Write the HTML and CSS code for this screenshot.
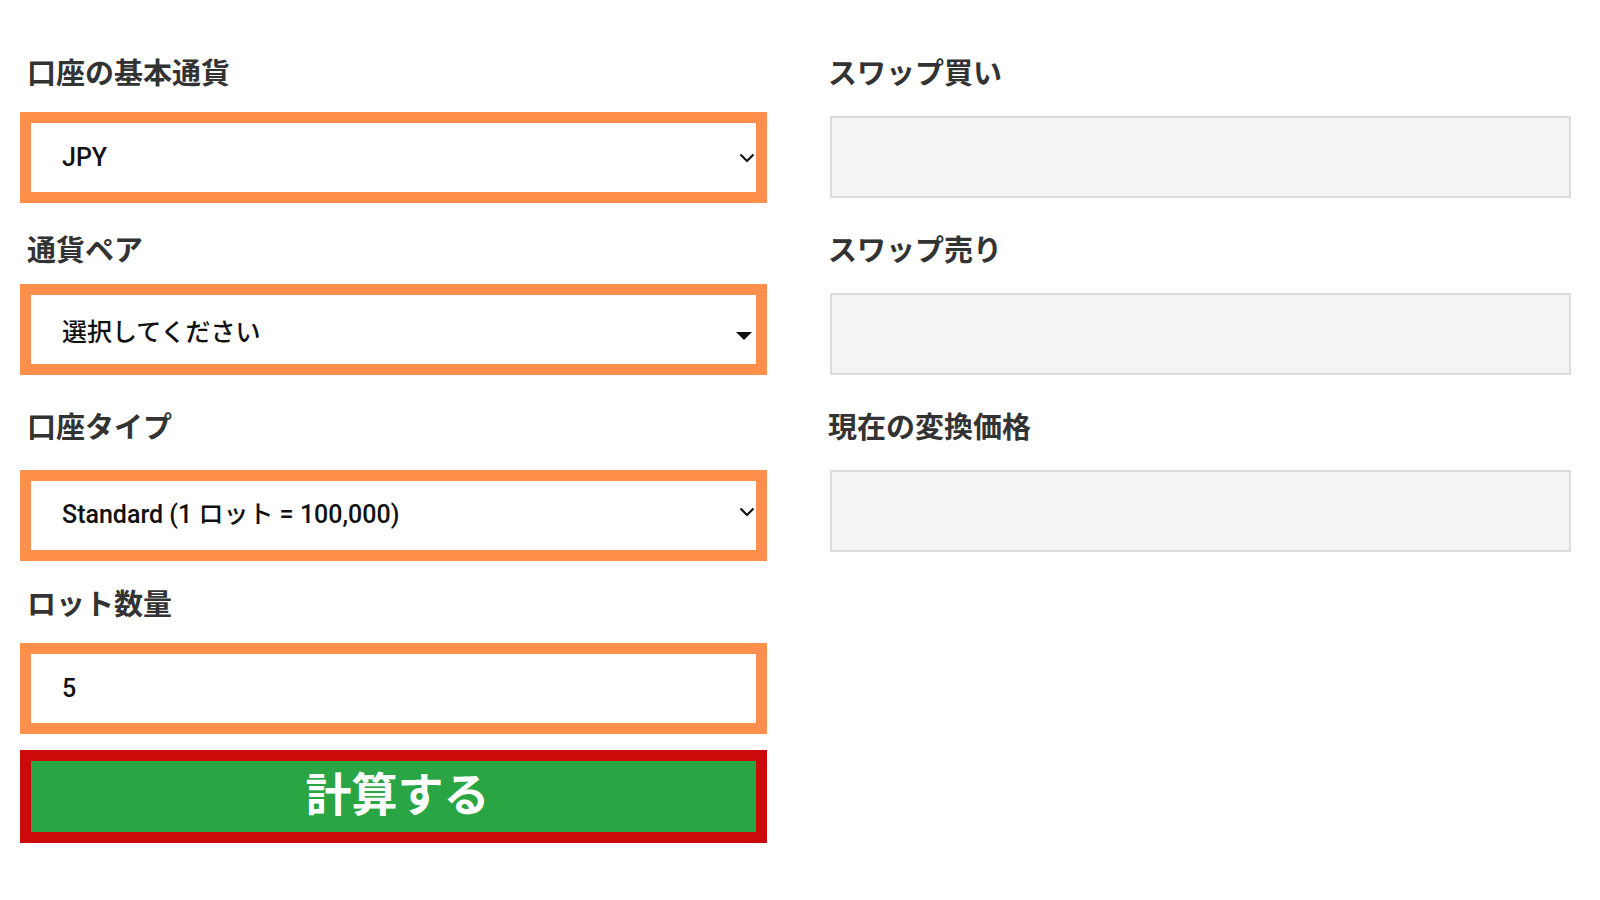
FILE: index.html
```html
<!DOCTYPE html>
<html lang="ja">
<head>
<meta charset="utf-8">
<title>スワップ計算ツール</title>
<link rel="stylesheet" href="styles.css">
</head>
<body>
<main class="calc">
  <section class="col col-left">
    <div class="field">
      <div class="label">口座の基本通貨</div>
      <div class="control">
        <span class="value">JPY</span>
        <svg class="chev" width="16" height="10" viewBox="0 0 16 10"><path d="M1.5 1.5 L8 8 L14.5 1.5" fill="none" stroke="#111" stroke-width="2.2"/></svg>
      </div>
    </div>
    <div class="field field-tight">
      <div class="label">通貨ペア</div>
      <div class="control">
        <span class="value">選択してください</span>
        <svg class="tri" width="16" height="8" viewBox="0 0 16 8"><polygon points="0,0 16,0 8,8" fill="#111"/></svg>
      </div>
    </div>
    <div class="field field-loose">
      <div class="label">口座タイプ</div>
      <div class="control control-raised">
        <span class="value">Standard (1 ロット = 100,000)</span>
        <svg class="chev" width="16" height="10" viewBox="0 0 16 10"><path d="M1.5 1.5 L8 8 L14.5 1.5" fill="none" stroke="#111" stroke-width="2.2"/></svg>
      </div>
    </div>
    <div class="field field-last">
      <div class="label">ロット数量</div>
      <div class="control">
        <span class="value">5</span>
      </div>
    </div>
    <button class="calc-btn" type="button">計算する</button>
  </section>
  <section class="col col-right">
    <div class="field">
      <div class="label">スワップ買い</div>
      <div class="output"></div>
    </div>
    <div class="field">
      <div class="label">スワップ売り</div>
      <div class="output"></div>
    </div>
    <div class="field">
      <div class="label">現在の変換価格</div>
      <div class="output"></div>
    </div>
  </section>
</main>
</body>
</html>
```

FILE: styles.css
```css
* { box-sizing: border-box; }

html, body {
  margin: 0;
  padding: 0;
  background: #ffffff;
}

body {
  font-family: Roboto, "Noto Sans CJK JP", sans-serif;
  color: #111;
}

.calc {
  display: grid;
  grid-template-columns: 747px 741px;
  column-gap: 63px;
  padding: 51px 0 0 20px;
}

.col {
  display: flex;
  flex-direction: column;
}

.label {
  height: 40px;
  line-height: 40px;
  font-family: "Noto Sans CJK JP", sans-serif;
  font-weight: 700;
  font-size: 29px;
  color: #333;
  white-space: nowrap;
}

.col-left .label {
  padding-left: 7px;
  margin-bottom: 21px;
}

.col-left .field {
  margin-bottom: 25px;
}

.col-left .field-tight .label {
  margin-bottom: 16px;
}

.col-left .field-tight {
  margin-bottom: 30px;
}

.col-left .field-loose .label {
  margin-bottom: 25px;
}

.col-left .field-loose {
  margin-bottom: 21px;
}

.col-left .field-last {
  margin-bottom: 16px;
}

.control {
  height: 91px;
  border: 11px solid #ff8f4b;
  background: #fff;
  display: flex;
  align-items: center;
  justify-content: space-between;
  padding: 0 1px 0 31px;
}

.control-raised {
  padding-bottom: 7px;
}

.value {
  font-family: Roboto, "Noto Sans CJK JP", sans-serif;
  font-weight: 500;
  font-size: 25px;
  color: #111;
}

.chev {
  display: block;
}

.tri {
  display: block;
  margin: 12px 3px 0 0;
}

.calc-btn {
  height: 93px;
  border: 11px solid #cc0a0a;
  background: #2aa544;
  color: #fff;
  font-family: "Noto Sans CJK JP", sans-serif;
  font-weight: 700;
  font-size: 46px;
  line-height: 1;
  padding: 0 0 11px 8px;
  margin: 0;
  cursor: pointer;
}

.col-right .label {
  margin-bottom: 25px;
  text-indent: -2px;
}

.col-right .field {
  margin-bottom: 30px;
}

.output {
  height: 82px;
  background: #f4f4f4;
  border: 2px solid #dcdcdc;
}
```
